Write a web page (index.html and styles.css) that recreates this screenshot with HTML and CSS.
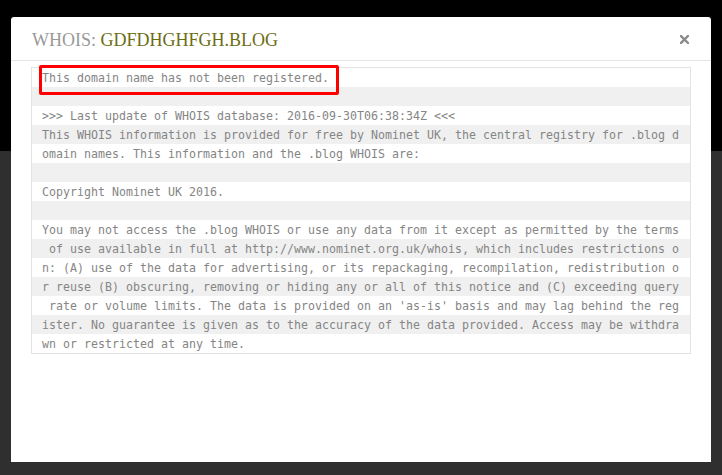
FILE: index.html
```html
<!DOCTYPE html>
<html lang="en">
<head>
  <meta charset="UTF-8">
  <meta name="viewport" content="width=device-width, initial-scale=1.0">
  <title>WHOIS: GDFDHGHFGH.BLOG</title>
  <link rel="stylesheet" href="styles.css">
</head>
<body>
  <div class="page-top"></div>
  <div class="page-rest"></div>

  <div class="modal">
    <div class="modal-header">
      <h4 class="modal-title">WHOIS: <span class="domain">GDFDHGHFGH.BLOG</span></h4>
      <button class="close" aria-label="Close">
        <svg width="9" height="9" viewBox="0 0 9 9">
          <path d="M1 1 L8 8 M8 1 L1 8" stroke="#8a8a8a" stroke-width="2.4" stroke-linecap="square"/>
        </svg>
      </button>
    </div>
    <div class="modal-body">
      <div class="whois">
        <!-- lines are wrapped the same way the raw whois output was -->
        <div class="line">This domain name has not been registered.</div>
        <div class="line"></div>
        <div class="line">&gt;&gt;&gt; Last update of WHOIS database: 2016-09-30T06:38:34Z &lt;&lt;&lt;</div>
        <div class="line">This WHOIS information is provided for free by Nominet UK, the central registry for .blog d</div>
        <div class="line">omain names. This information and the .blog WHOIS are:</div>
        <div class="line"></div>
        <div class="line">Copyright Nominet UK 2016.</div>
        <div class="line"></div>
        <div class="line">You may not access the .blog WHOIS or use any data from it except as permitted by the terms</div>
        <div class="line"> of use available in full at http://www.nominet.org.uk/whois, which includes restrictions o</div>
        <div class="line">n: (A) use of the data for advertising, or its repackaging, recompilation, redistribution o</div>
        <div class="line">r reuse (B) obscuring, removing or hiding any or all of this notice and (C) exceeding query</div>
        <div class="line"> rate or volume limits. The data is provided on an 'as-is' basis and may lag behind the reg</div>
        <div class="line">ister. No guarantee is given as to the accuracy of the data provided. Access may be withdra</div>
        <div class="line">wn or restricted at any time.</div>
        <div class="highlight"></div>
      </div>
    </div>
  </div>
</body>
</html>
```

FILE: styles.css
```css
html, body {
  height: 100%;
}
body {
  margin: 0;
  padding: 0;
  background-color: #2f2f2f;
  font-family: "Liberation Sans", Arial, sans-serif;
}
.page-top {
  height: 151px;
  background-color: #000;
}
.modal {
  position: absolute;
  top: 17px;
  left: 11px;
  width: 700px;
  height: 445px;
  background-color: #fff;
  border-radius: 3px 3px 0 0;
  box-sizing: border-box;
}
.modal-header {
  display: flex;
  align-items: center;
  justify-content: space-between;
  height: 43px;
  padding: 0 21px;
  border-bottom: 1px solid #e5e5e5;
}
.modal-title {
  margin: 0;
  padding-top: 3px;
  font-family: "Liberation Serif", "Times New Roman", serif;
  font-size: 18px;
  font-weight: normal;
  color: #999;
}
.domain {
  color: #6d6d12;
}
.close {
  display: flex;
  padding: 0;
  margin: 1px 1px 0 0;
  border: none;
  background: none;
  cursor: pointer;
}
.modal-body {
  padding: 6px 20px 0;
}
.whois {
  position: relative;
  border: 1px solid #e3e3e3;
  font-family: "DejaVu Sans Mono", "Liberation Mono", monospace;
  font-size: 11.6px;
  letter-spacing: 0.02px;
  color: #858585;
}
.line {
  height: 19px;
  line-height: 20px;
  padding: 0 10px;
  white-space: pre;
}
.line:nth-child(even) {
  background-color: #f0f0f0;
}
.highlight {
  position: absolute;
  top: -3px;
  left: 7px;
  width: 300px;
  height: 30px;
  box-sizing: border-box;
  border: 3px solid #f00;
  border-radius: 2px;
}
```
